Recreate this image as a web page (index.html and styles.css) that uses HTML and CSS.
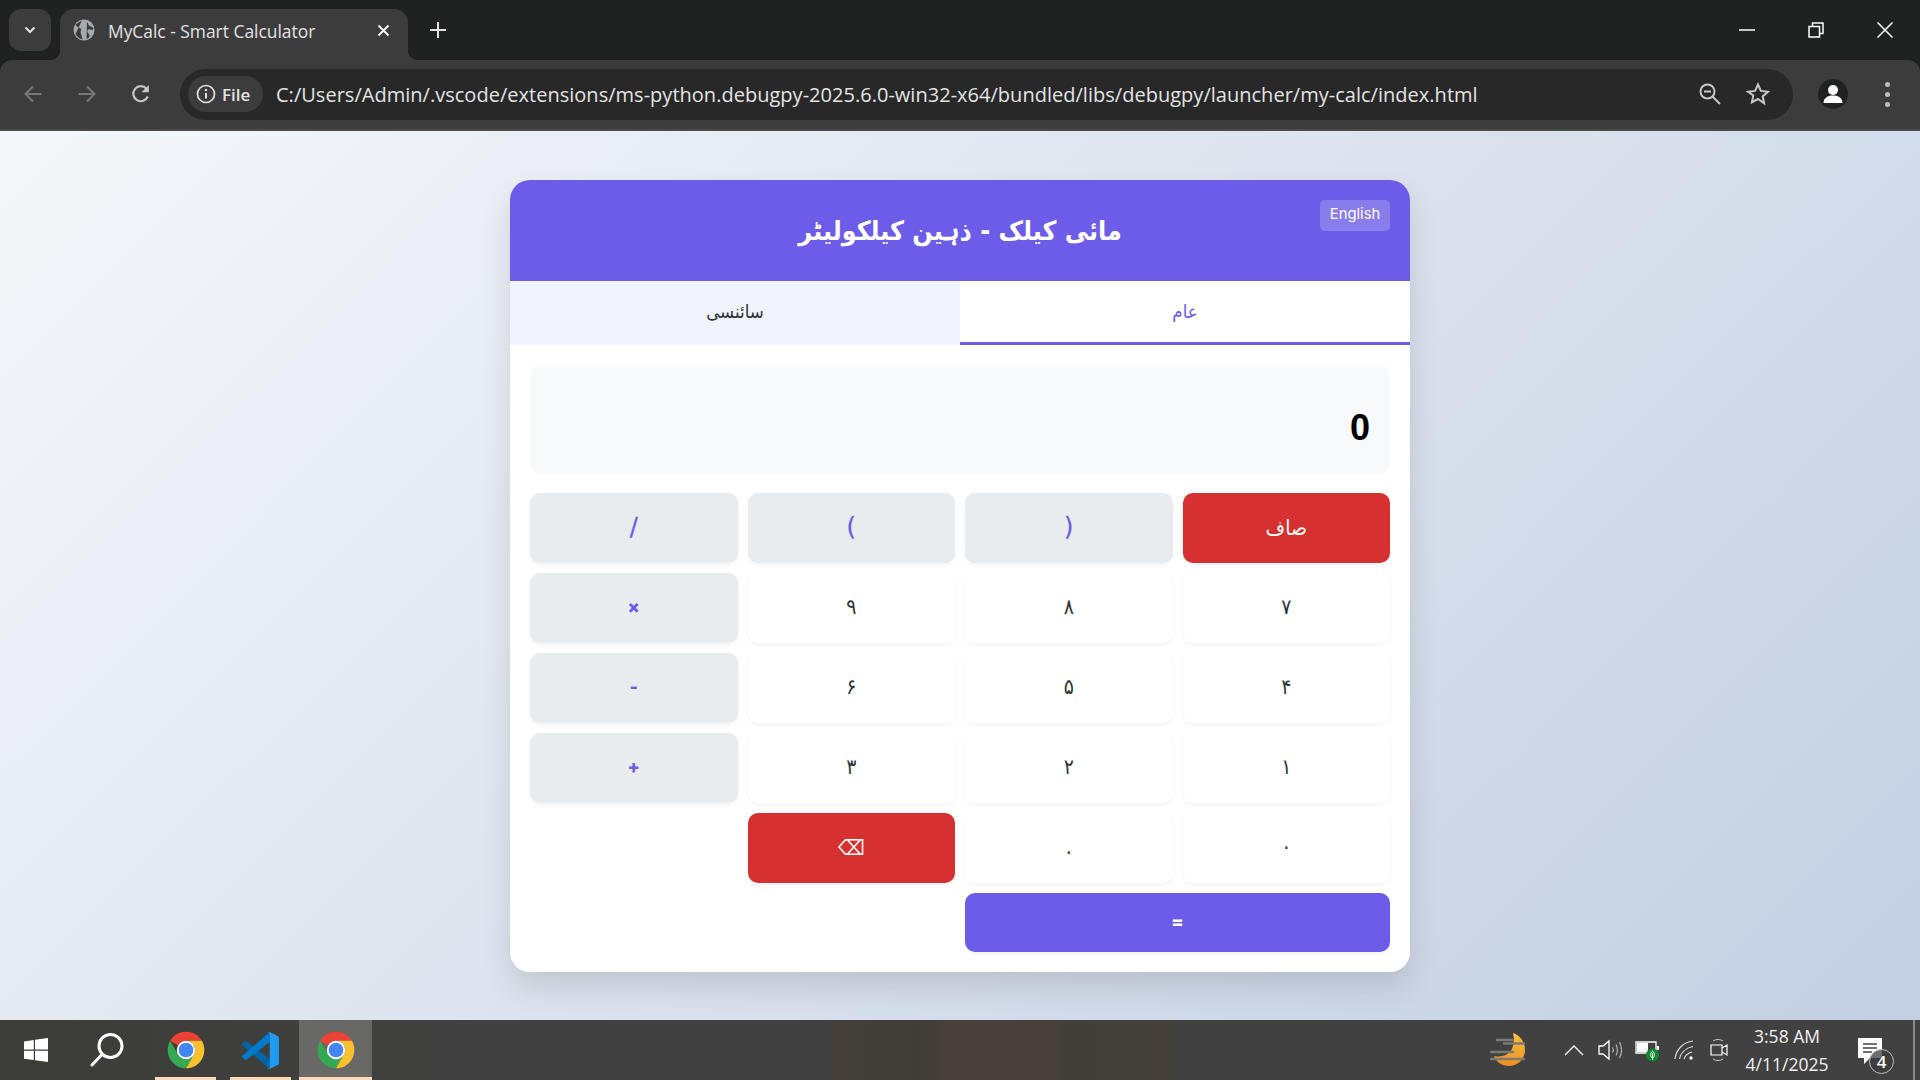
FILE: index.html
```html
<!DOCTYPE html>
<html lang="ur">
<head>
<meta charset="utf-8">
<title>MyCalc - Smart Calculator</title>
<link rel="stylesheet" href="styles.css">
</head>
<body>
<div class="browser" dir="ltr">
  <div class="tabstrip">
    <div class="tablist"><svg width="14" height="14" viewBox="0 0 14 14"><path d="M2.500 4.500 7 9l4.500-4.500" fill="none" stroke="#e3e3e3" stroke-width="2"/></svg></div>
    <div class="tab">
      <svg class="favicon" width="22" height="22" viewBox="0 0 22 22"><circle cx="11" cy="11" r="10.500" fill="#a6aaae"/><path d="M9 1.500C7 3 4 4 2.500 6c1.500 2 4 2.500 5.500 4 .5 1.500-1 3 0 4.500l1.500 6C7 20 4 18 2.500 15M14 3c1.500 1 1 3.500 3 4l3.500 2c0 2-2 2-3.500 1.500-2-.5-3 .5-2.500 2.500s2.500 2 2 4c-.5 1.500-1.500 2.500-3 3" fill="#3c3c3c"/></svg>
      <span class="tabtitle">MyCalc - Smart Calculator</span>
      <svg class="tabclose" width="13" height="13" viewBox="0 0 13 13"><path d="M1.500 1.500l10 10m0-10l-10 10" stroke="#f2f2f2" stroke-width="2"/></svg>
    </div>
    <svg class="newtab" width="16" height="16" viewBox="0 0 16 16"><path d="M8 0v16M0 8h16" stroke="#e3e3e3" stroke-width="2"/></svg>
    <div class="winctl">
      <svg width="16" height="16" viewBox="0 0 16 16"><path d="M0 8h16" stroke="#fff" stroke-width="1.500"/></svg>
      <svg width="16" height="16" viewBox="0 0 16 16"><path d="M1 4.500h10.500V15H1zM4.500 4V1H15v10.500h-3.500" fill="none" stroke="#fff" stroke-width="1.500"/></svg>
      <svg width="16" height="16" viewBox="0 0 16 16"><path d="M.5.500l15 15m0-15l-15 15" stroke="#fff" stroke-width="1.500"/></svg>
    </div>
  </div>
  <div class="toolbar">
    <div class="navbtns">
      <svg width="20" height="20" viewBox="0 0 20 20"><path d="M18.500 10H2.500M10 2.500 2.500 10l7.500 7.500" fill="none" stroke="#777" stroke-width="2"/></svg>
      <svg width="20" height="20" viewBox="0 0 20 20"><path d="M1.500 10h16M10 2.500l7.500 7.500-7.500 7.500" fill="none" stroke="#777" stroke-width="2"/></svg>
      <svg width="20" height="20" viewBox="0 0 20 20"><path d="M16.800 12.500A7.500 7.500 0 1 1 15.500 4.800" fill="none" stroke="#c7c7c7" stroke-width="2.200"/><path d="M17.800 1v7.300h-7.300z" fill="#c7c7c7"/></svg>
    </div>
    <div class="omnibox">
      <div class="chip">
        <svg width="20" height="20" viewBox="0 0 20 20"><circle cx="10" cy="10" r="8.500" fill="none" stroke="#e3e3e3" stroke-width="1.700"/><path d="M10 9v5.500" stroke="#e3e3e3" stroke-width="2"/><circle cx="10" cy="6" r="1.200" fill="#e3e3e3"/></svg>
        <span>File</span>
      </div>
      <span class="url">C:/Users/Admin/.vscode/extensions/ms-python.debugpy-2025.6.0-win32-x64/bundled/libs/debugpy/launcher/my-calc/index.html</span>
      <svg class="lens" width="22" height="22" viewBox="0 0 22 22"><circle cx="8.500" cy="8.500" r="7" fill="none" stroke="#c7c7c7" stroke-width="2"/><path d="M13.500 13.500l7.500 7.500" stroke="#c7c7c7" stroke-width="2"/><path d="M5 8.500h7" stroke="#c7c7c7" stroke-width="2"/></svg>
      <svg class="star" width="24" height="24" viewBox="0 0 24 24"><path d="M12 2.500l2.900 6.400 7 .8-5.200 4.700 1.400 6.900L12 17l-6.100 3.300 1.400-6.900L2.100 9.700l7-.8z" fill="none" stroke="#c7c7c7" stroke-width="2" stroke-linejoin="miter"/></svg>
    </div>
    <div class="avatar"><svg width="22" height="22" viewBox="0 0 22 22"><circle cx="11" cy="7" r="5" fill="#fff"/><path d="M1.500 20c0-5 4-7.500 9.500-7.500s9.500 2.500 9.500 7.500z" fill="#fff"/></svg></div>
    <div class="menu"><i></i><i></i><i></i></div>
  </div>
</div>

<main class="page">
  <div class="calc" dir="rtl">
    <header class="calc-head">
      <h1>مائی کیلک - ذہین کیلکولیٹر</h1>
      <button class="lang" dir="ltr">English</button>
    </header>
    <div class="tabs">
      <button class="mode selected">عام</button>
      <button class="mode">سائنسی</button>
    </div>
    <div class="calc-body">
      <div class="display" dir="ltr">0</div>
      <div class="keys">
        <button class="key danger">صاف</button>
        <button class="key op big">(</button>
        <button class="key op big">)</button>
        <button class="key op big">/</button>
        <button class="key">۷</button>
        <button class="key">۸</button>
        <button class="key">۹</button>
        <button class="key op">×</button>
        <button class="key">۴</button>
        <button class="key">۵</button>
        <button class="key">۶</button>
        <button class="key op">-</button>
        <button class="key">۱</button>
        <button class="key">۲</button>
        <button class="key">۳</button>
        <button class="key op">+</button>
        <button class="key">۰</button>
        <button class="key">.</button>
        <button class="key danger">⌫</button>
        <button class="key equals">=</button>
      </div>
    </div>
  </div>
</main>

<footer class="taskbar" dir="ltr">
  <div class="slot start"><svg width="24" height="24" viewBox="0 0 24 24"><path d="M0 3.400l9.800-1.400v9.500H0zM11 1.800 24 0v11.500H11zM0 12.700h9.800v9.400L0 20.700zM11 12.700h13V24l-13-1.800z" fill="#fff"/></svg></div>
  <div class="slot search"><svg width="34" height="34" viewBox="0 0 34 34"><circle cx="20.500" cy="13" r="11.500" fill="none" stroke="#fff" stroke-width="3"/><path d="M12 21.500 2 32" stroke="#fff" stroke-width="3" stroke-linecap="round"/></svg></div>
  <div class="slot app open">
    <svg width="44" height="44" viewBox="0 0 48 48"><path d="M6.680 14A20 20 0 0 1 41.320 14H24A10 10 0 0 0 15.340 19Z" fill="#ea4335"/><path d="M6.680 14A20 20 0 0 0 24 44L32.660 29A10 10 0 0 1 15.340 29Z" fill="#34a853"/><path d="M41.320 14H24A10 10 0 0 1 32.660 29L24 44A20 20 0 0 0 41.320 14Z" fill="#fbc02d"/><circle cx="24" cy="24" r="10" fill="#fff"/><circle cx="24" cy="24" r="8" fill="#4285f4"/></svg>
  </div>
  <div class="slot app open vs">
    <svg width="37" height="37" viewBox="0 0 100 100"><path d="M1.400 36.500a4.200 4.200 0 0 1 0-6.200l5.500-5a4.200 4.200 0 0 1 5.300-.2L75 72.700v22.500a6 6 0 0 1-7-1.500z" fill="#0065a9"/><path d="M1.400 63.500a4.200 4.200 0 0 0 0 6.200l5.500 5a4.200 4.200 0 0 0 5.300.2L75 27.300V4.800a6 6 0 0 0-7 1.500z" fill="#007acc"/><path d="M68 94.500a6.200 6.200 0 0 0 7.800 4.600l20.600-9.900a6.200 6.200 0 0 0 3.500-5.600V16.400a6.200 6.200 0 0 0-3.500-5.600L75.800.9A6.200 6.200 0 0 0 68 5.500a3.600 3.600 0 0 1 7 2.500v84a3.600 3.600 0 0 1-7 2.500z" fill="#1f9cf0"/></svg>
  </div>
  <div class="slot app open focused">
    <svg width="44" height="44" viewBox="0 0 48 48"><path d="M6.680 14A20 20 0 0 1 41.320 14H24A10 10 0 0 0 15.340 19Z" fill="#ea4335"/><path d="M6.680 14A20 20 0 0 0 24 44L32.660 29A10 10 0 0 1 15.340 29Z" fill="#34a853"/><path d="M41.320 14H24A10 10 0 0 1 32.660 29L24 44A20 20 0 0 0 41.320 14Z" fill="#fbc02d"/><circle cx="24" cy="24" r="10" fill="#fff"/><circle cx="24" cy="24" r="8" fill="#4285f4"/></svg>
  </div>
  <div class="tray">
    <svg class="weather" width="36" height="36" viewBox="0 0 36 36"><defs><linearGradient id="wx" x1="0" y1="0" x2="0" y2="1"><stop offset="0" stop-color="#f6c343"/><stop offset="1" stop-color="#ee8f1f"/></linearGradient></defs><path d="M23 1C30 3 35 10 35 18c0 9-7 16-16 16C12 34 6 30 4 24c9 2 17-2 19-10 1-5 1-9 0-13z" fill="url(#wx)"/><path d="M7 8h15M14 11.500h20M1 20h22M1 27h33" stroke="#7a7a7a" stroke-width="2.400" stroke-linecap="round"/></svg>
    <svg class="chev" width="20" height="12" viewBox="0 0 20 12"><path d="M1 11l9-9 9 9" fill="none" stroke="#fff" stroke-width="1.300"/></svg>
    <svg class="spk" width="24" height="22" viewBox="0 0 24 22"><path d="M1 7h4l6-5v18l-6-5H1z" fill="none" stroke="#fff" stroke-width="1.300"/><path d="M14.500 8.500c1 1.500 1 3.500 0 5M18 5.500c1.800 3.500 1.800 7.500 0 11M21.500 3c2.500 5 2.500 11 0 16" fill="none" stroke="#bbb" stroke-width="1.100"/></svg>
    <svg class="bat" width="26" height="24" viewBox="0 0 26 24"><path d="M1 4h20v11H1z" fill="none" stroke="#fff" stroke-width="1.300"/><path d="M2 5h11v9H2z" fill="#fff"/><path d="M22 8h2v4h-2z" fill="#fff"/><circle cx="17.500" cy="17" r="6.500" fill="#0c8a2e"/><path d="M17.500 13c2.500 2 2.500 5 0 7.500-2.500-2.500-2.500-5.500 0-7.500zM17.500 15v7" fill="none" stroke="#fff" stroke-width="1"/></svg>
    <svg class="wifi" width="20" height="20" viewBox="0 0 20 20"><path d="M1 19C2 10 9 2 19 1M5.500 19c1-6 6-11 13.500-12.500M10 19c1-3 4-6 8-7" fill="none" stroke="#ddd" stroke-width="1.200"/><circle cx="17" cy="18" r="1.700" fill="#fff"/></svg>
    <svg class="cam" width="18" height="24" viewBox="0 0 18 24"><path d="M1 7h11v10H1zM12 10l5-3v10l-5-3z" fill="none" stroke="#fff" stroke-width="1.200"/><path d="M3 3c3-2 7-2 10 0M3 21c3 2 7 2 10 0" fill="none" stroke="#ccc" stroke-width="1"/></svg>
    <div class="clock"><span>3:58 AM</span><span>4/11/2025</span></div>
    <div class="notif">
      <svg width="24" height="26" viewBox="0 0 24 26"><path d="M0 0h24v20H12l-6 6v-6H0z" fill="#fff"/><path d="M5 6h14M5 10h14M5 14h9" stroke="#444" stroke-width="1.300"/></svg>
      <span class="badge">4</span>
    </div>
    <div class="peek"></div>
  </div>
</footer>
</body>
</html>
```

FILE: styles.css
```css
* { box-sizing: border-box; }
html, body { margin: 0; height: 100%; }
body {
  display: flex;
  flex-direction: column;
  height: 100vh;
  overflow: hidden;
  font-family: "Noto Sans", "DejaVu Sans", sans-serif;
}

/* browser chrome */
.browser { flex: none; background: #202222; }
.tabstrip { height: 60px; display: flex; align-items: flex-end; padding-left: 9px; position: relative; }
.tablist {
  width: 42px; height: 42px; margin-bottom: 9px;
  background: #3c3c3c; border-radius: 12px;
  display: flex; align-items: center; justify-content: center;
}
.tab {
  width: 348px; height: 51px; margin-left: 9px;
  background: #3c3c3c; border-radius: 14px 14px 0 0;
  display: flex; align-items: center; padding: 0 18px 9px 13px;
  position: relative;
}
.tab::before, .tab::after { content: ""; position: absolute; bottom: 0; width: 10px; height: 10px; }
.tab::before { left: -10px; background: radial-gradient(circle at 0 0, transparent 10px, #3c3c3c 10.500px); }
.tab::after { right: -10px; background: radial-gradient(circle at 100% 0, transparent 10px, #3c3c3c 10.500px); }
.favicon { flex: none; }
.tabtitle { margin-left: 13px; padding-top: 1px; font: 17.400px "Open Sans", sans-serif; color: #e3e3e3; white-space: nowrap; flex: 1; }
.newtab { margin: 0 0 22px 22px; }
.winctl { margin-left: auto; display: flex; gap: 53px; padding-right: 27px; margin-bottom: 22px; }

.toolbar {
  height: 71px; background: #3c3c3c;
  border-radius: 12px 12px 0 0;
  border-bottom: 2px solid #4a4a4a;
  display: flex; align-items: center; padding: 0 0 1px 23px;
}
.navbtns { display: flex; gap: 34px; width: 157px; flex: none; }
.omnibox {
  width: 1613px; height: 51px; flex: none;
  background: #282828; border-radius: 26px;
  display: flex; align-items: center; padding-left: 8px;
}
.chip {
  width: 75px; height: 36px; flex: none;
  background: #3c3c3c; border-radius: 18px;
  display: flex; align-items: center; gap: 6px; padding-left: 8px;
  color: #e3e3e3; font: 600 17px "Open Sans", sans-serif;
}
.url { margin-left: 13px; font: 20px "Open Sans", sans-serif; letter-spacing: .02px; color: #e3e3e3; white-space: nowrap; flex: 1; overflow: hidden; }
.lens { margin-right: 25px; flex: none; }
.star { margin-right: 23px; flex: none; }
.avatar {
  width: 30px; height: 30px; margin-left: 25px; flex: none;
  background: #202222; border-radius: 50%;
  display: flex; align-items: center; justify-content: center;
}
.menu { margin-left: 37px; display: flex; flex-direction: column; gap: 5px; }
.menu i { width: 5px; height: 5px; border-radius: 50%; background: #bdbdbd; }

/* page */
.page {
  flex: 1; min-height: 0;
  background: linear-gradient(135deg, #f5f7fa 0%, #c3cfe2 100%);
  display: flex; align-items: center; justify-content: center;
}
.calc {
  width: 900px; background: #fff; border-radius: 20px; overflow: hidden;
  box-shadow: 0 15px 30px rgba(0, 0, 0, .12);
}
.calc-head {
  height: 101px; background: #6c5ce7; color: #fff;
  display: flex; align-items: center; justify-content: center;
  position: relative;
}
.calc-head h1 { margin: 0; font: 700 26.600px "DejaVu Sans Condensed", "DejaVu Sans", sans-serif; }
.lang {
  position: absolute; top: 20px; right: 20px;
  width: 70px; height: 31px; padding: 0 0 2px;
  border: 0; border-radius: 5px;
  background: rgba(255, 255, 255, .2); color: #fff;
  font: 14.800px Inter, sans-serif;
}
.tabs { display: grid; grid-template-columns: 1fr 1fr; height: 64px; }
.mode {
  border: 0; border-bottom: 3px solid transparent;
  background: #f1f3ff; color: #2d3436; padding: 1px 0 0;
  font: 18.600px "DejaVu Sans Condensed", "DejaVu Sans", sans-serif;
}
.mode.selected { background: #fff; color: #6c5ce7; border-bottom-color: #6c5ce7; }
.calc-body { padding: 20px; }
.display {
  height: 108px; background: #f8f9fa; border-radius: 10px;
  display: flex; align-items: center; justify-content: flex-end;
  padding: 19px 20px 0 0;
  font: 700 36px "Liberation Sans", sans-serif; color: #000;
  margin-bottom: 20px;
}
.keys { display: grid; grid-template-columns: repeat(4, 1fr); gap: 10px; }
.key {
  height: 70px; padding: 0 0 2px; border: 0; border-radius: 10px;
  background: #fff; color: #2d3436;
  box-shadow: 0 2px 5px rgba(0, 0, 0, .05);
  font: 400 21px "DejaVu Sans Condensed", "DejaVu Sans", sans-serif;
}
.key.op { background: #e9ecef; color: #6c5ce7; font: 800 18px Inter, sans-serif; }
.key.big { font: 400 24px "DejaVu Sans", sans-serif; -webkit-text-stroke: .3px #6c5ce7; }
.key.danger { background: #d63031; color: #fff; padding: 0; }
.key.equals {
  grid-column: span 2; height: 59px;
  background: #6c5ce7; color: #fff; font: 800 18px Inter, sans-serif;
}

/* taskbar */
.taskbar {
  height: 60px; flex: none;
  background: linear-gradient(90deg, #3c3c38 0, #414141 500px, #414141 828px, #45403a 830px, #403c36 920px, #4a403a 950px, #4a403a 1050px, #423e38 1070px, #45403a 1170px, #414141 1175px, #414141 1920px);
  display: flex; align-items: center; color: #fff;
}
.slot { height: 60px; display: flex; align-items: center; justify-content: center; position: relative; flex: none; }
.start { width: 72px; }
.search { width: 70px; }
.app { width: 61px; margin-left: 13px; }
.vs { margin-left: 14px; }
.focused { width: 73px; background: #686866; margin-left: 8px; }
.open::after { content: ""; position: absolute; left: 0; right: 0; bottom: 0; height: 3px; background: #fcd9b8; }
.tray { margin-left: auto; display: flex; align-items: center; height: 60px; }
.weather { margin-right: 38px; }
.chev { margin-right: 14px; }
.spk { margin-right: 13px; }
.bat { margin-right: 13px; }
.wifi { margin-right: 16px; }
.clock {
  width: 118px; display: flex; flex-direction: column; align-items: center;
  font: 17.500px/28px "Open Sans", sans-serif; color: #f2f2f2;
}
.notif { width: 40px; height: 60px; position: relative; margin-left: 12px; padding-top: 18px; }
.badge {
  position: absolute; left: 11px; top: 29px;
  width: 25px; height: 25px; border-radius: 50%;
  border: 1px solid #bbb; background: rgba(60, 60, 60, .75);
  display: flex; align-items: center; justify-content: center;
  font: 600 17px "Open Sans", sans-serif;
}
.peek { width: 2px; height: 60px; background: #888; margin-left: 15px; margin-right: 5px; }
```
